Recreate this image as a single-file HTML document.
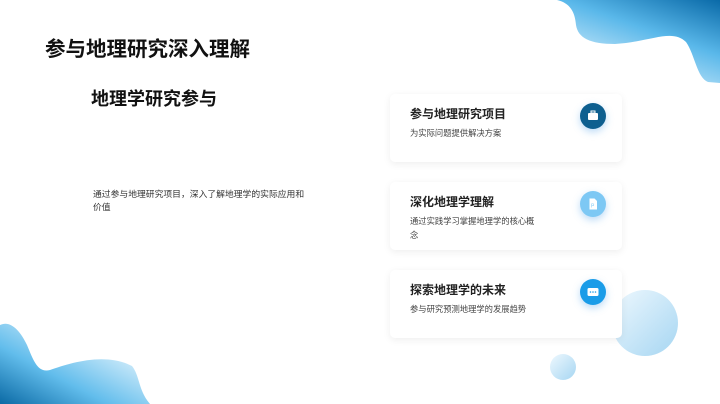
<!DOCTYPE html>
<html><head><meta charset="utf-8"><style>
body{margin:0;width:720px;height:404px;overflow:hidden;background:#fff;font-family:"Liberation Sans","Noto Sans CJK SC",sans-serif;position:relative}
.abs{position:absolute}
h1{position:absolute;left:45px;top:32px;margin:0;font-size:20.5px;font-weight:700;color:#111;letter-spacing:0}
h2{position:absolute;left:91px;top:85px;margin:0;font-size:18px;font-weight:700;color:#111}
.p{position:absolute;left:93px;top:188px;width:260px;font-size:8.8px;line-height:13px;color:#333;white-space:nowrap}
.card{position:absolute;left:390px;width:232px;height:68px;background:#fff;border-radius:5px;box-shadow:0 2px 8px rgba(0,0,0,0.07)}
.card .t{position:absolute;left:20px;top:11px;font-size:12px;font-weight:700;color:#222}
.card .s{position:absolute;left:20px;top:32px;width:160px;font-size:8.3px;line-height:14px;color:#444;white-space:nowrap}
.ic{position:absolute;left:190px;top:9px;width:26px;height:26px;border-radius:50%;box-shadow:0 3px 8px rgba(60,150,230,0.35)}
</style></head><body>
<svg class="abs" style="left:0;top:0" width="720" height="404">
<defs>
<linearGradient id="g1" x1="1" y1="0" x2="0.3" y2="1"><stop offset="0" stop-color="#0a6aa8"/><stop offset="0.45" stop-color="#5ab8ea"/><stop offset="1" stop-color="#e4f4fd"/></linearGradient>
<linearGradient id="g2" x1="0" y1="1" x2="0.8" y2="0.2"><stop offset="0" stop-color="#0b6aa5"/><stop offset="0.45" stop-color="#62bdec"/><stop offset="1" stop-color="#e6f5fd"/></linearGradient>
<linearGradient id="g3" x1="0" y1="0" x2="1" y2="1"><stop offset="0" stop-color="#eef8fe"/><stop offset="1" stop-color="#a6d6f2"/></linearGradient>
</defs>
<path d="M557 0 C570 3 575 12 576 25 C578 38 590 44 615 44 C650 42 672 28 686 42 C695 55 697 78 708 82 L720 83 L720 0 Z" fill="url(#g1)"/>
<path d="M0 325 C10 320 20 330 27 345 C34 362 38 373 50 370 C70 363 105 352 132 366 C140 376 138 390 150 404 L0 404 Z" fill="url(#g2)"/>
<circle cx="645" cy="323" r="33" fill="url(#g3)"/>
<circle cx="563" cy="367" r="13" fill="url(#g3)"/>
</svg>
<h1>参与地理研究深入理解</h1>
<h2>地理学研究参与</h2>
<div class="p">通过参与地理研究项目，深入了解地理学的实际应用和<br>价值</div>
<div class="card" style="top:94px"><div class="t">参与地理研究项目</div><div class="s">为实际问题提供解决方案</div>
<div class="ic" style="background:#0e5f8f"><svg width="26" height="26"><rect x="8" y="10" width="10" height="7" rx="1" fill="#fff"/><rect x="11" y="8" width="4" height="2" fill="none" stroke="#fff" stroke-width="1"/></svg></div></div>
<div class="card" style="top:182px"><div class="t">深化地理学理解</div><div class="s">通过实践学习掌握地理学的核心概<br>念</div>
<div class="ic" style="background:#7dc8f4"><svg width="26" height="26"><path d="M9.5 7.5h5l2.5 2.5v8.5h-7.5z" fill="#fff"/><text x="11" y="16.5" font-size="5" fill="#7dc8f4" font-family="Liberation Sans">P</text></svg></div></div>
<div class="card" style="top:270px"><div class="t">探索地理学的未来</div><div class="s">参与研究预测地理学的发展趋势</div>
<div class="ic" style="background:#1a9ce8"><svg width="26" height="26"><rect x="7.5" y="9" width="11" height="8" rx="1.5" fill="#fff"/><circle cx="10.5" cy="13" r="0.8" fill="#1a9ce8"/><circle cx="13" cy="13" r="0.8" fill="#1a9ce8"/><circle cx="15.5" cy="13" r="0.8" fill="#1a9ce8"/></svg></div></div>
</body></html>
